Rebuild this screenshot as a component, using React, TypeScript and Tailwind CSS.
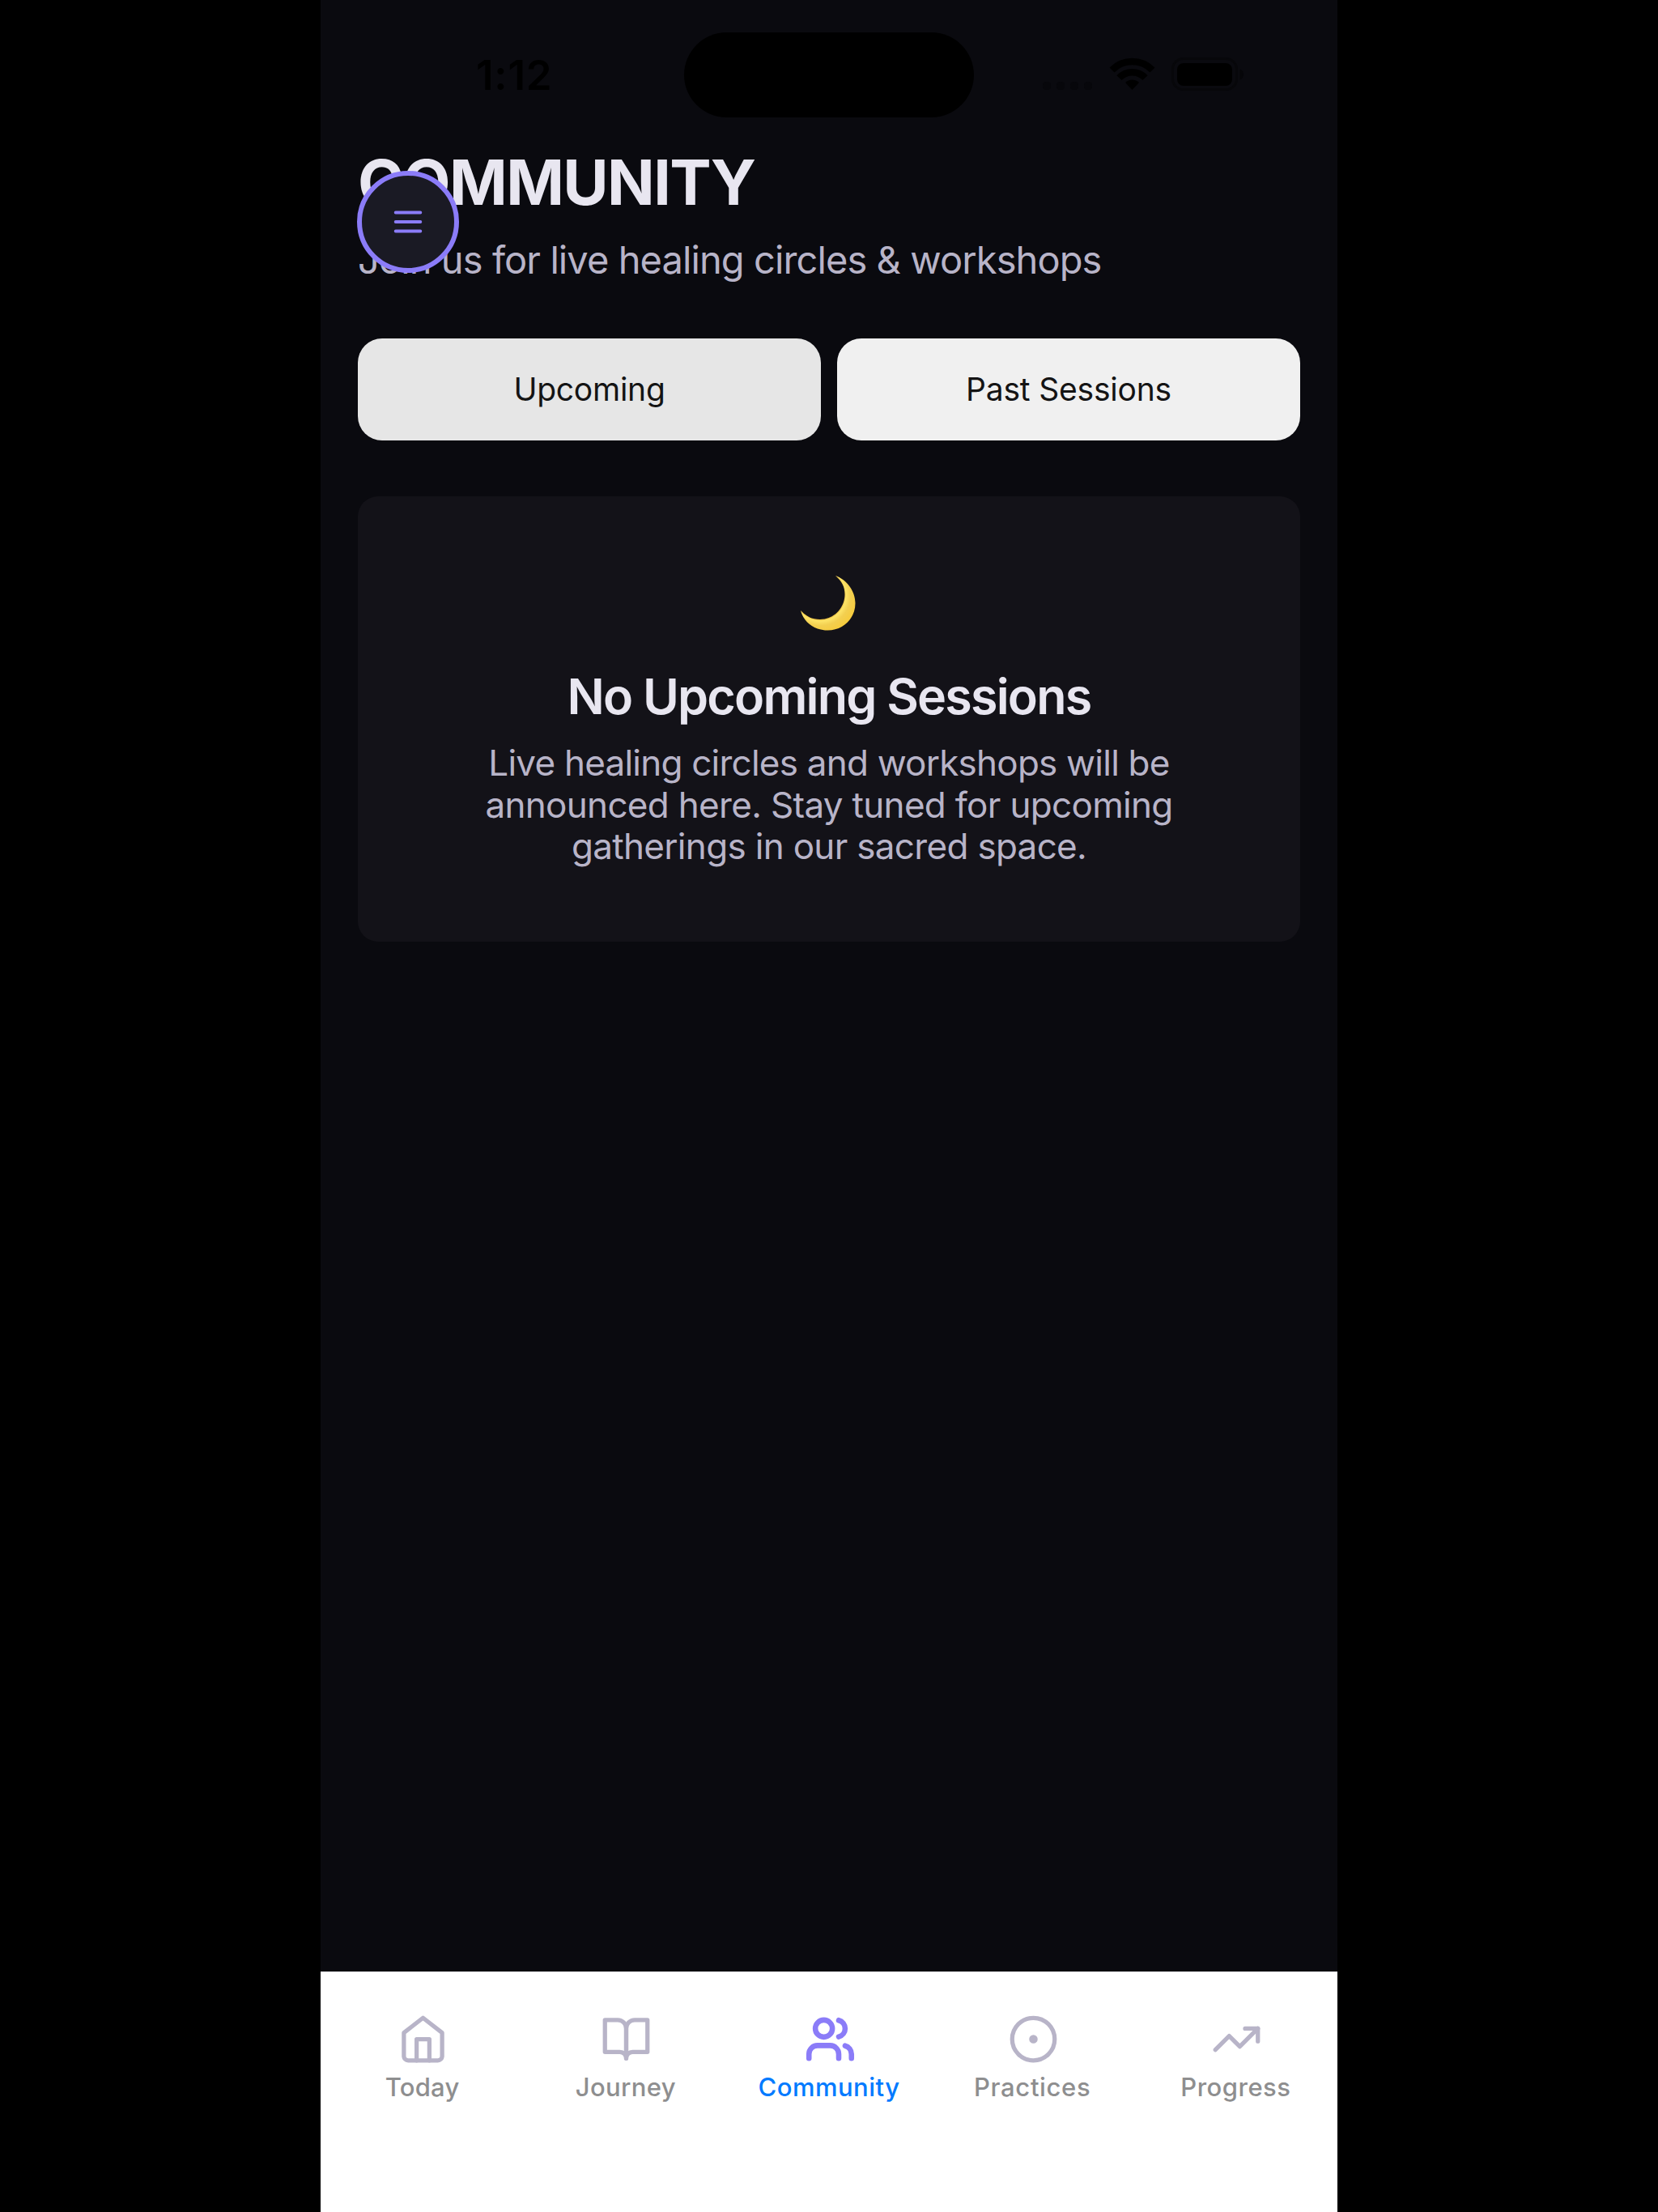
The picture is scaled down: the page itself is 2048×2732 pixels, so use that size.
import React from "react";

function StatusIcons() {
  return (
    <svg width="252" height="48" viewBox="0 0 252 48" fill="none">
      {[6, 23, 40, 57].map((x) => (
        <rect key={x} x={x - 5} y="33" width="10" height="10" rx="4" fill="#07070b" />
      ))}
      <g transform="translate(84 3)" stroke="#000" strokeWidth="8.5">
        <path d="M2.5 15.5 A35 35 0 0 1 52.5 15.5" />
        <path d="M11.5 25.2 A22 22 0 0 1 43.5 25.2" />
        <path d="M27.5 40 L19 31 A12 12 0 0 1 36 31 Z" fill="#000" stroke="none" />
      </g>
      <rect x="161.5" y="4.5" width="79" height="38" rx="13" stroke="#07070a" strokeWidth="3" />
      <rect x="167" y="10" width="68" height="28" rx="8" fill="#000" />
      <path d="M244.5 17.5 Q249 19 249 24 Q249 29 244.5 30.5 Z" fill="#060609" />
    </svg>
  );
}

function TabIcon({ name }: { name: string }) {
  const active = name === "Community";
  return (
    <svg
      width="63"
      height="63"
      viewBox="0 0 24 24"
      fill="none"
      stroke={active ? "#8b7cf8" : "#b8b4c8"}
      strokeWidth={active ? 2.5 : 2}
      strokeLinecap="round"
      strokeLinejoin="round"
      className="translate-x-px"
    >
      {name === "Today" && (
        <>
          <path d="m3 9 9-7 9 7v11a2 2 0 0 1-2 2H5a2 2 0 0 1-2-2z" />
          <path d="M9 22V12h6v10" />
        </>
      )}
      {name === "Journey" && (
        <>
          <path d="M2 3h6a4 4 0 0 1 4 4v14a3 3 0 0 0-3-3H2z" />
          <path d="M22 3h-6a4 4 0 0 0-4 4v14a3 3 0 0 1 3-3h7z" />
        </>
      )}
      {name === "Community" && (
        <>
          <path d="M16 21v-2a4 4 0 0 0-4-4H6a4 4 0 0 0-4 4v2" />
          <circle cx="9" cy="7" r="4" />
          <path d="M22 21v-2a4 4 0 0 0-3-3.87" />
          <path d="M16 3.13a4 4 0 0 1 0 7.75" />
        </>
      )}
      {name === "Practices" && (
        <>
          <circle cx="12" cy="12" r="10" />
          <circle cx="12" cy="12" r="1" />
        </>
      )}
      {name === "Progress" && (
        <>
          <path d="m22 7-8.5 8.5-5-5L2 17" />
          <path d="M16 7h6v6" />
        </>
      )}
    </svg>
  );
}

function Moon() {
  return (
    <svg width="68" height="69" viewBox="0 0 68 69" className="-translate-x-px">
      <defs>
        <radialGradient id="moon" gradientUnits="userSpaceOnUse" cx="24" cy="24" r="54">
          <stop offset="0.54" stopColor="#e0a92c" />
          <stop offset="0.59" stopColor="#fde468" />
          <stop offset="0.7" stopColor="#f3cf50" />
          <stop offset="0.9" stopColor="#f7cb3a" />
          <stop offset="1" stopColor="#f0bd24" />
        </radialGradient>
      </defs>
      <path
        d="M43 0 C57 5 67.500 19 67.500 34 C67.500 53 52.500 67.500 33.500 67.500 C17 67.500 4 58 0 43 C8 51.500 15.500 54 24 54 C41 54 54.500 40 54.500 23 C54.500 14 51 7 43 0 Z"
        fill="url(#moon)"
      />
    </svg>
  );
}

const tabs = [
  { name: "Today", style: "tracking-[0.2px] text-[#8e8e8f]" },
  { name: "Journey", style: "tracking-[0.35px] text-[#8e8e8f]" },
  { name: "Community", style: "tracking-[0.5px] text-[#007aff]" },
  { name: "Practices", style: "tracking-[0.65px] text-[#8e8e8f]" },
  { name: "Progress", style: "tracking-[0.5px] text-[#8e8e8f]" },
];

export default function App() {
  return (
    <div className="flex h-[2732px] w-[2048px] justify-center overflow-hidden bg-black font-['Inter',sans-serif]">
      <div className="relative flex h-full w-[1256px] flex-col bg-[#0a0a0f]">
        <div className="absolute left-[449px] top-[40px] h-[105px] w-[358px] rounded-full bg-black" />
        <div className="absolute left-[192px] top-[60px] text-[51px] font-semibold leading-[66px] tracking-[0.8px] text-black">
          1:12
        </div>
        <div className="absolute left-[891px] top-[68px]">
          <StatusIcons />
        </div>

        <main className="flex flex-1 flex-col px-[46px] pt-[177px]">
          <h1 className="h-[96px] whitespace-nowrap text-[77px] font-bold leading-[97px] tracking-[-1.6px] text-[#e8e6f0]">
            COMMUNITY
          </h1>
          <p className="mt-[19px] h-[58px] whitespace-nowrap text-[47px] leading-[57px] tracking-[-0.91px] text-[#b8b4c8]">
            Join us for live healing circles &amp; workshops
          </p>
          <div className="mt-[68px] flex gap-[20px]">
            <button className="h-[126px] flex-1 rounded-[30px] bg-[#e6e6e6] text-[39px] tracking-[-0.25px] text-[#141414]">
              Upcoming
            </button>
            <button className="h-[126px] flex-1 rounded-[30px] bg-[#f0f0f0] text-[39px] tracking-[-0.2px] text-[#141414]">
              Past Sessions
            </button>
          </div>
          <section className="mt-[69px] flex h-[550px] flex-col items-center rounded-[25px] bg-[#131218] pt-[98px]">
            <Moon />
            <h2 className="mt-[42px] whitespace-nowrap text-[61px] font-semibold leading-[76px] tracking-[-1.8px] text-[#e8e6f0]">
              No Upcoming Sessions
            </h2>
            <p className="mt-[19px] whitespace-nowrap text-center text-[44px] leading-[51.5px] tracking-[-0.68px] text-[#b8b4c8]">
              <span className="tracking-[-0.77px]">Live healing circles and workshops will be</span>
              <br />
              announced here. Stay tuned for upcoming
              <br />
              gatherings in our sacred space.
            </p>
          </section>
        </main>

        <nav className="flex h-[297px] bg-white pt-[52px]">
          {tabs.map((t) => (
            <div key={t.name} className="flex flex-1 flex-col items-center">
              <TabIcon name={t.name} />
              <span className={`mt-[8px] text-[31px] font-medium leading-[40px] ${t.style}`}>{t.name}</span>
            </div>
          ))}
        </nav>

        <button className="absolute left-[45px] top-[211px] flex size-[126px] items-center justify-center rounded-full border-[6px] border-[#8b7cf8] bg-[#1a1a24]">
          <svg width="46" height="46" viewBox="0 0 24 24" stroke="#8b7cf8" strokeWidth="2" strokeLinecap="round">
            <path d="M4 6h16M4 12h16M4 18h16" />
          </svg>
        </button>
      </div>
    </div>
  );
}
